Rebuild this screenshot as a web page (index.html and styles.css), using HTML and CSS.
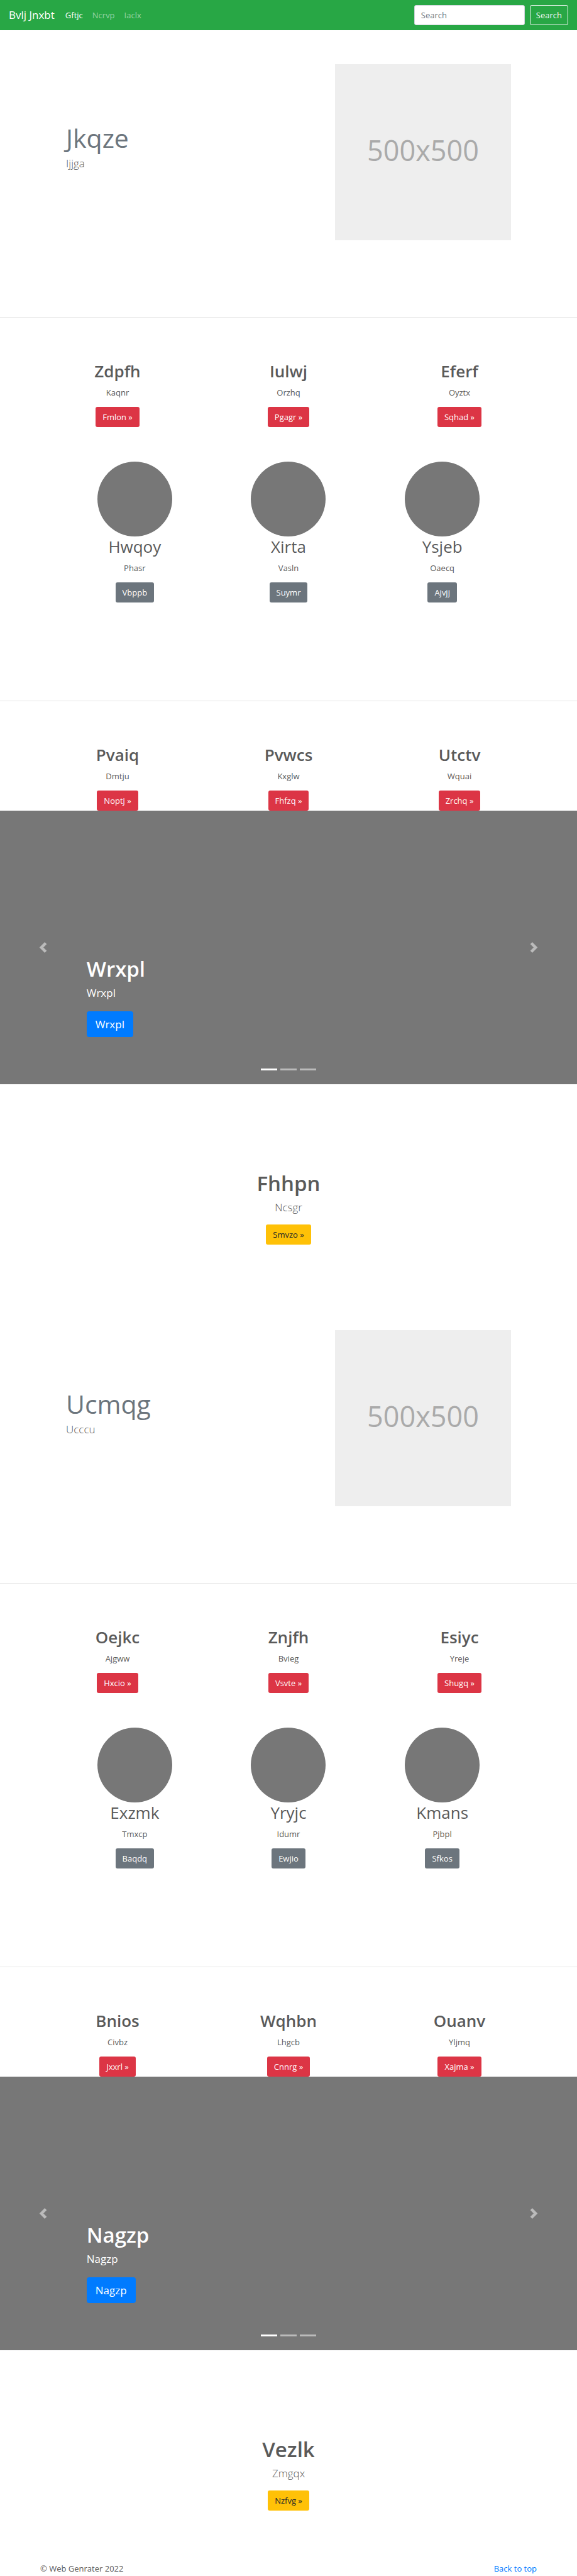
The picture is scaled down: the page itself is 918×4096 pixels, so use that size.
FILE: index.html
```html
<!DOCTYPE html>
<html lang="en">
<head>
<meta charset="utf-8">
<meta name="viewport" content="width=device-width, initial-scale=1">
<title>Bvlj Jnxbt</title>
<link rel="stylesheet" href="styles.css">
</head>
<body>
<header class="navbar" id="top">
  <a class="brand" href="#">Bvlj Jnxbt</a>
  <nav class="nav-links">
    <a class="nav-link active" href="#">Gftjc</a>
    <a class="nav-link" href="#">Ncrvp</a>
    <a class="nav-link" href="#">Iaclx</a>
  </nav>
  <form class="search">
    <input class="search-input" type="search" placeholder="Search" aria-label="Search">
    <button class="btn btn-outline" type="button">Search</button>
  </form>
</header>
<main>
  <section class="featurette">
    <div class="featurette-row">
      <div class="featurette-text">
        <h2 class="featurette-title">Jkqze</h2>
        <p class="lead">Ijjga</p>
      </div>
      <div class="placeholder">500x500</div>
    </div>
  </section>
  <section class="columns">
    <div class="column"><h2 class="title title-strong">Zdpfh</h2><p class="text">Kaqnr</p><a class="btn btn-danger" href="#">Fmlon »</a></div>
    <div class="column"><h2 class="title title-strong">Iulwj</h2><p class="text">Orzhq</p><a class="btn btn-danger" href="#">Pgagr »</a></div>
    <div class="column"><h2 class="title title-strong">Eferf</h2><p class="text">Oyztx</p><a class="btn btn-danger" href="#">Sqhad »</a></div>
  </section>
  <section class="circles">
    <div class="column"><div class="circle"></div><h2 class="title">Hwqoy</h2><p class="text">Phasr</p><a class="btn btn-secondary" href="#">Vbppb</a></div>
    <div class="column"><div class="circle"></div><h2 class="title">Xirta</h2><p class="text">Vasln</p><a class="btn btn-secondary" href="#">Suymr</a></div>
    <div class="column"><div class="circle"></div><h2 class="title">Ysjeb</h2><p class="text">Oaecq</p><a class="btn btn-secondary" href="#">Ajvjj</a></div>
  </section>
  <hr class="divider">
  <section class="columns">
    <div class="column"><h2 class="title title-strong">Pvaiq</h2><p class="text">Dmtju</p><a class="btn btn-danger" href="#">Noptj »</a></div>
    <div class="column"><h2 class="title title-strong">Pvwcs</h2><p class="text">Kxglw</p><a class="btn btn-danger" href="#">Fhfzq »</a></div>
    <div class="column"><h2 class="title title-strong">Utctv</h2><p class="text">Wquai</p><a class="btn btn-danger" href="#">Zrchq »</a></div>
  </section>
  <section class="carousel">
    <button class="control control-prev" type="button" aria-label="Previous"><svg class="arrow" viewBox="0 0 8 8"><path d="M5.25 0l-4 4 4 4 1.5-1.5L4.250 4l2.500-2.500L5.250 0z"/></svg></button>
    <div class="caption">
      <h1 class="display">Wrxpl</h1>
      <p class="caption-text">Wrxpl</p>
      <a class="btn btn-primary" href="#">Wrxpl</a>
    </div>
    <button class="control control-next" type="button" aria-label="Next"><svg class="arrow" viewBox="0 0 8 8"><path d="M2.750 0l-1.500 1.500L3.750 4l-2.500 2.500L2.750 8l4-4-4-4z"/></svg></button>
    <div class="indicators"><span class="dot current"></span><span class="dot"></span><span class="dot"></span></div>
  </section>
  <section class="callout">
    <h1 class="display">Fhhpn</h1>
    <p class="lead">Ncsgr</p>
    <a class="btn btn-warning" href="#">Smvzo »</a>
  </section>

  <section class="featurette">
    <div class="featurette-row">
      <div class="featurette-text">
        <h2 class="featurette-title">Ucmqg</h2>
        <p class="lead">Ucccu</p>
      </div>
      <div class="placeholder">500x500</div>
    </div>
  </section>
  <section class="columns">
    <div class="column"><h2 class="title title-strong">Oejkc</h2><p class="text">Ajgww</p><a class="btn btn-danger" href="#">Hxcio »</a></div>
    <div class="column"><h2 class="title title-strong">Znjfh</h2><p class="text">Bvieg</p><a class="btn btn-danger" href="#">Vsvte »</a></div>
    <div class="column"><h2 class="title title-strong">Esiyc</h2><p class="text">Yreje</p><a class="btn btn-danger" href="#">Shugq »</a></div>
  </section>
  <section class="circles">
    <div class="column"><div class="circle"></div><h2 class="title">Exzmk</h2><p class="text">Tmxcp</p><a class="btn btn-secondary" href="#">Baqdq</a></div>
    <div class="column"><div class="circle"></div><h2 class="title">Yryjc</h2><p class="text">Idumr</p><a class="btn btn-secondary" href="#">Ewjio</a></div>
    <div class="column"><div class="circle"></div><h2 class="title">Kmans</h2><p class="text">Pjbpl</p><a class="btn btn-secondary" href="#">Sfkos</a></div>
  </section>
  <hr class="divider">
  <section class="columns">
    <div class="column"><h2 class="title title-strong">Bnios</h2><p class="text">Civbz</p><a class="btn btn-danger" href="#">Jxxrl »</a></div>
    <div class="column"><h2 class="title title-strong">Wqhbn</h2><p class="text">Lhgcb</p><a class="btn btn-danger" href="#">Cnnrg »</a></div>
    <div class="column"><h2 class="title title-strong">Ouanv</h2><p class="text">Yljmq</p><a class="btn btn-danger" href="#">Xajma »</a></div>
  </section>
  <section class="carousel">
    <button class="control control-prev" type="button" aria-label="Previous"><svg class="arrow" viewBox="0 0 8 8"><path d="M5.25 0l-4 4 4 4 1.5-1.5L4.250 4l2.500-2.500L5.250 0z"/></svg></button>
    <div class="caption">
      <h1 class="display">Nagzp</h1>
      <p class="caption-text">Nagzp</p>
      <a class="btn btn-primary" href="#">Nagzp</a>
    </div>
    <button class="control control-next" type="button" aria-label="Next"><svg class="arrow" viewBox="0 0 8 8"><path d="M2.750 0l-1.500 1.500L3.750 4l-2.500 2.500L2.750 8l4-4-4-4z"/></svg></button>
    <div class="indicators"><span class="dot current"></span><span class="dot"></span><span class="dot"></span></div>
  </section>
  <section class="callout">
    <h1 class="display">Vezlk</h1>
    <p class="lead">Zmgqx</p>
    <a class="btn btn-warning" href="#">Nzfvg »</a>
  </section>
</main>
<footer class="footer">
  <p class="text">© Web Genrater 2022</p>
  <a class="top-link" href="#top">Back to top</a>
</footer>
</body>
</html>
```
FILE: styles.css
```css
* { box-sizing: border-box; }
body {
  margin: 0;
  background: #fff;
  color: #5a5a5a;
  font: 400 13px/20px "Open Sans", "Noto Sans", sans-serif;
}
h1, h2, p { margin: 0; }
a { text-decoration: none; }

.navbar {
  display: flex;
  align-items: center;
  padding: 8px 14px;
  background: #28a745;
}
.brand { color: #fff; font-size: 17px; line-height: 24px; }
.nav-links { display: flex; flex: 1; gap: 15px; margin-left: 17px; }
.nav-link { color: rgba(255, 255, 255, .5); }
.nav-link.active { color: #fff; }
.search { display: flex; gap: 8px; }
.search-input {
  width: 176px;
  height: 32px;
  padding: 5px 10px;
  border: 1px solid #ced4da;
  border-radius: 3px;
  background: #fff;
  color: #495057;
  font: inherit;
}
.search-input::placeholder { color: #6c757d; opacity: 1; }

.btn {
  display: inline-block;
  padding: 5px 10px;
  border: 1px solid transparent;
  border-radius: 3px;
  color: #fff;
  font: inherit;
  text-align: center;
}
.btn-outline { padding: 5px 9px; border-color: #f8f9fa; background: transparent; color: #f8f9fa; }
.btn-danger { background: #dc3545; }
.btn-secondary { background: #6c757d; }
.btn-warning { background: #ffc107; color: #212529; }
.btn-primary {
  padding: 7px 13px;
  border-radius: 4px;
  background: #007bff;
  font-size: 17px;
  line-height: 25px;
}

.featurette { padding: 54px 0 122px; border-bottom: 1px solid #e5e5e5; }
.featurette-row {
  display: grid;
  grid-template-columns: 7fr 5fr;
  max-width: 734px;
  margin: 0 auto;
}
.featurette-text { padding: 92px 13px 0; }
.featurette-title {
  margin-bottom: 3px;
  color: #6c757d;
  font-size: 41px;
  font-weight: 400;
  line-height: 50px;
}
.lead { font-size: 17px; font-weight: 300; line-height: 26px; }
.placeholder {
  display: flex;
  align-items: center;
  justify-content: center;
  aspect-ratio: 1;
  margin: 0 13px;
  padding-bottom: 5px;
  background: #eee;
  color: #aaa;
  font-size: 45px;
  line-height: 60px;
}

.columns, .circles {
  display: grid;
  grid-template-columns: repeat(3, 1fr);
  margin: 0 auto;
  text-align: center;
}
.columns { max-width: 816px; padding-top: 69px; }
.circles { max-width: 734px; padding: 55px 0 156px; }
.column { display: flex; flex-direction: column; align-items: center; }
.circle { width: 119px; height: 119px; border-radius: 50%; background: #777; }
.title { margin-bottom: 8px; font-size: 26px; font-weight: 400; line-height: 32px; }
.title-strong { font-weight: 600; }
.column .text { margin-bottom: 13px; }
.divider { height: 1px; margin: 0; border: 0; background: #e5e5e5; }

.carousel {
  position: relative;
  display: flex;
  height: 435px;
  background: #777;
  color: #fff;
}
.control {
  display: flex;
  align-items: center;
  justify-content: center;
  width: 15%;
  padding: 0;
  border: 0;
  background: none;
  opacity: .5;
}
.arrow { width: 17px; height: 17px; fill: #fff; }
.caption {
  display: flex;
  flex: 1;
  flex-direction: column;
  align-items: flex-start;
  justify-content: flex-end;
  padding-bottom: 75px;
}
.display { margin-bottom: 5px; font-size: 33px; font-weight: 600; line-height: 40px; }
.caption-text { margin-bottom: 16px; font-size: 17px; line-height: 26px; }
.indicators {
  position: absolute;
  right: 0;
  bottom: 22px;
  left: 0;
  display: flex;
  justify-content: center;
  gap: 5px;
}
.dot { width: 26px; height: 3px; background: #fff; opacity: .5; }
.dot.current { opacity: 1; }

.callout {
  display: flex;
  flex-direction: column;
  align-items: center;
  padding: 138px 0 82px;
}
.callout .lead { margin-bottom: 14px; }

.footer {
  display: flex;
  justify-content: space-between;
  max-width: 816px;
  margin: 0 auto;
  padding: 0 13px 2px;
}
.top-link { color: #007bff; }
```
